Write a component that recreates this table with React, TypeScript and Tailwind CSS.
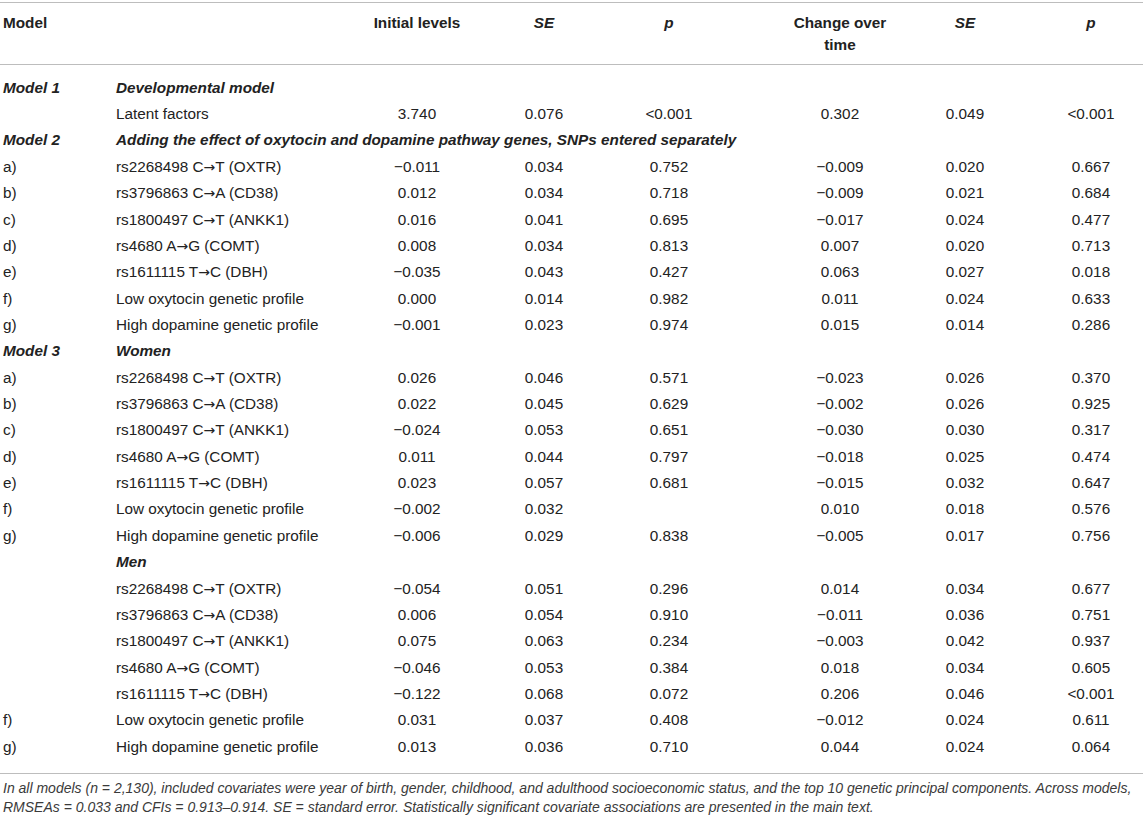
import React from "react";

type Row =
  | { kind: "section"; model: string; title: string }
  | { kind: "data"; tag: string; label: string; v: string[] };

const M = "\u2212";

const rows: Row[] = [
  { kind: "section", model: "Model 1", title: "Developmental model" },
  { kind: "data", tag: "", label: "Latent factors", v: ["3.740", "0.076", "<0.001", "0.302", "0.049", "<0.001"] },
  {
    kind: "section",
    model: "Model 2",
    title: "Adding the effect of oxytocin and dopamine pathway genes, SNPs entered separately",
  },
  { kind: "data", tag: "a)", label: "rs2268498 C→T (OXTR)", v: [`${M}0.011`, "0.034", "0.752", `${M}0.009`, "0.020", "0.667"] },
  { kind: "data", tag: "b)", label: "rs3796863 C→A (CD38)", v: ["0.012", "0.034", "0.718", `${M}0.009`, "0.021", "0.684"] },
  { kind: "data", tag: "c)", label: "rs1800497 C→T (ANKK1)", v: ["0.016", "0.041", "0.695", `${M}0.017`, "0.024", "0.477"] },
  { kind: "data", tag: "d)", label: "rs4680 A→G (COMT)", v: ["0.008", "0.034", "0.813", "0.007", "0.020", "0.713"] },
  { kind: "data", tag: "e)", label: "rs1611115 T→C (DBH)", v: [`${M}0.035`, "0.043", "0.427", "0.063", "0.027", "0.018"] },
  { kind: "data", tag: "f)", label: "Low oxytocin genetic profile", v: ["0.000", "0.014", "0.982", "0.011", "0.024", "0.633"] },
  { kind: "data", tag: "g)", label: "High dopamine genetic profile", v: [`${M}0.001`, "0.023", "0.974", "0.015", "0.014", "0.286"] },
  { kind: "section", model: "Model 3", title: "Women" },
  { kind: "data", tag: "a)", label: "rs2268498 C→T (OXTR)", v: ["0.026", "0.046", "0.571", `${M}0.023`, "0.026", "0.370"] },
  { kind: "data", tag: "b)", label: "rs3796863 C→A (CD38)", v: ["0.022", "0.045", "0.629", `${M}0.002`, "0.026", "0.925"] },
  { kind: "data", tag: "c)", label: "rs1800497 C→T (ANKK1)", v: [`${M}0.024`, "0.053", "0.651", `${M}0.030`, "0.030", "0.317"] },
  { kind: "data", tag: "d)", label: "rs4680 A→G (COMT)", v: ["0.011", "0.044", "0.797", `${M}0.018`, "0.025", "0.474"] },
  { kind: "data", tag: "e)", label: "rs1611115 T→C (DBH)", v: ["0.023", "0.057", "0.681", `${M}0.015`, "0.032", "0.647"] },
  { kind: "data", tag: "f)", label: "Low oxytocin genetic profile", v: [`${M}0.002`, "0.032", "", "0.010", "0.018", "0.576"] },
  { kind: "data", tag: "g)", label: "High dopamine genetic profile", v: [`${M}0.006`, "0.029", "0.838", `${M}0.005`, "0.017", "0.756"] },
  { kind: "section", model: "", title: "Men" },
  { kind: "data", tag: "", label: "rs2268498 C→T (OXTR)", v: [`${M}0.054`, "0.051", "0.296", "0.014", "0.034", "0.677"] },
  { kind: "data", tag: "", label: "rs3796863 C→A (CD38)", v: ["0.006", "0.054", "0.910", `${M}0.011`, "0.036", "0.751"] },
  { kind: "data", tag: "", label: "rs1800497 C→T (ANKK1)", v: ["0.075", "0.063", "0.234", `${M}0.003`, "0.042", "0.937"] },
  { kind: "data", tag: "", label: "rs4680 A→G (COMT)", v: [`${M}0.046`, "0.053", "0.384", "0.018", "0.034", "0.605"] },
  { kind: "data", tag: "", label: "rs1611115 T→C (DBH)", v: [`${M}0.122`, "0.068", "0.072", "0.206", "0.046", "<0.001"] },
  { kind: "data", tag: "f)", label: "Low oxytocin genetic profile", v: ["0.031", "0.037", "0.408", `${M}0.012`, "0.024", "0.611"] },
  { kind: "data", tag: "g)", label: "High dopamine genetic profile", v: ["0.013", "0.036", "0.710", "0.044", "0.024", "0.064"] },
];

// column widths picked so each number column centres where the reference does
const cols = "grid grid-cols-[113px_240px_128px_126px_124px_160px_148px_104px]";
const numCell = ["text-center", "text-center", "text-center", "text-center pl-[58px]", "text-center", "text-center"];

// Liberation's arrow is tiny, the source uses a long one
function Label({ text }: { text: string }) {
  const parts = text.split("→");
  if (parts.length < 2) return <>{text}</>;
  return (
    <>
      {parts[0]}
      <span className="font-['DejaVu_Sans',sans-serif] text-[14px]">→</span>
      {parts[1]}
    </>
  );
}

export default function App() {
  return (
    <div className="w-[1143px] h-[816px] overflow-hidden bg-white pt-[2px] font-['Liberation_Sans',Arial,sans-serif] text-[15.3px] text-[#222]">
      <div className="border-t border-[#bdbdbd]">
        <div className={`${cols} h-[62px] pt-[9px] leading-[22px] font-bold border-b border-[#bdbdbd]`}>
          <div className="pl-[3px]">Model</div>
          <div />
          <div className="text-center">Initial levels</div>
          <div className="text-center italic">SE</div>
          <div className="text-center italic">p</div>
          <div className="text-center pl-[58px]">
            Change over
            <br />
            time
          </div>
          <div className="text-center italic">SE</div>
          <div className="text-center italic">p</div>
        </div>

        <div className="pt-[10px] pb-[13px] border-b border-[#bdbdbd]">
          {rows.map((r, i) =>
            r.kind === "section" ? (
              <div key={i} className={`${cols} h-[26.36px] items-center font-bold italic`}>
                <div className="pl-[3px]">{r.model}</div>
                <div className="col-span-7 pl-[3px] whitespace-nowrap">{r.title}</div>
              </div>
            ) : (
              <div key={i} className={`${cols} h-[26.36px] items-center`}>
                <div className="pl-[3px]">{r.tag}</div>
                <div className="pl-[3px] whitespace-nowrap">
                  <Label text={r.label} />
                </div>
                {r.v.map((val, j) => (
                  <div key={j} className={numCell[j]}>
                    {val}
                  </div>
                ))}
              </div>
            )
          )}
        </div>
      </div>

      <p className="pt-[5px] pl-[3px] pr-[2px] text-[14px] leading-[19px] italic text-[#3a3a3a]">
        In all models (n = 2,130), included covariates were year of birth, gender, childhood, and adulthood
        socioeconomic status, and the top 10 genetic principal components. Across models, RMSEAs = 0.033 and CFIs =
        0.913–0.914. SE = standard error. Statistically significant covariate associations are presented in the main
        text.
      </p>
    </div>
  );
}
